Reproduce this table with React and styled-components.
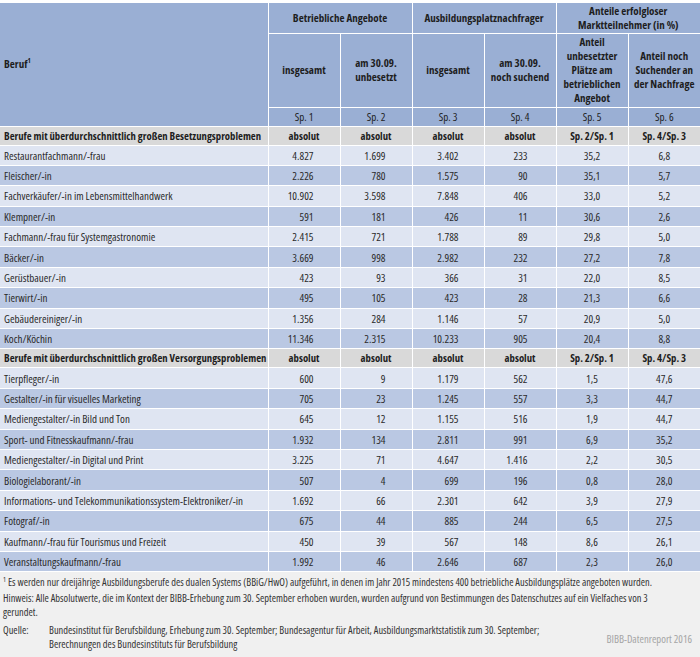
import React from 'react';
import styled, { createGlobalStyle } from 'styled-components';

const GlobalStyle = createGlobalStyle`
  body {
    margin: 0;
    background: #fff;
    font-family: "Open Sans", "Roboto", "DejaVu Sans Condensed", sans-serif;
    font-stretch: 75%;
    color: #2a2a2a;
  }
`;

const Page = styled.div`
  width: 700px;
  padding-top: 3px;
`;

const Table = styled.table`
  width: 700px;
  border-collapse: collapse;
  table-layout: fixed;
  font-size: 11px;
`;

const HeadCell = styled.th`
  background: #9aafd4;
  border: 1px solid #fff;
  border-top: 0;
  font-weight: ${props => props.$light ? 'normal' : 'bold'};
  text-align: ${props => props.$left ? 'left' : 'center'};
  padding: ${props => props.$left ? '0 4px' : '0 3px'};
  line-height: 14px;
  color: #1e1e1e;
  &:first-child { border-left: 0; }
  &:last-child { border-right: 0; }
`;

const HeadRow = styled.tr`
  height: ${props => props.$h}px;
`;

const SectionRow = styled.tr`
  height: 19px;
  background: #d9d9d9;
  font-weight: bold;
  font-size: 10.7px;
  color: #1e1e1e;
`;

const DataRow = styled.tr`
  height: 20.4px;
  background: ${props => props.$dark ? '#bac8e3' : '#dfe5f2'};
`;

const Cell = styled.td`
  border: 1px solid #fff;
  padding: 0 ${props => props.$pad || 4}px 0 4px;
  text-align: ${props => props.$align || 'left'};
  white-space: nowrap;
  &:first-child { border-left: 0; }
  &:last-child { border-right: 0; }
`;

const Sup = styled.sup`
  font-size: 7px;
  line-height: 0;
`;

const Footer = styled.div`
  background: #f0f0f0;
  padding: 3px 3px 6px;
  font-size: 10.4px;
  line-height: 14px;
  color: #333;
`;

const Note = styled.p`
  margin: 0 0 2px;
  white-space: nowrap;
`;

const Source = styled.div`
  display: flex;
  margin-top: 4px;
  position: relative;
`;

const SourceLabel = styled.span`
  flex: 0 0 46px;
`;

const Credit = styled.span`
  position: absolute;
  right: 5px;
  bottom: 5px;
  color: #a5a5a5;
  font-size: 10.7px;
`;

const groups = [
  ['Berufe mit überdurchschnittlich großen Besetzungsproblemen', [
    ['Restaurantfachmann/-frau', '4.827', '1.699', '3.402', '233', '35,2', '6,8'],
    ['Fleischer/-in', '2.226', '780', '1.575', '90', '35,1', '5,7'],
    ['Fachverkäufer/-in im Lebensmittelhandwerk', '10.902', '3.598', '7.848', '406', '33,0', '5,2'],
    ['Klempner/-in', '591', '181', '426', '11', '30,6', '2,6'],
    ['Fachmann/-frau für Systemgastronomie', '2.415', '721', '1.788', '89', '29,8', '5,0'],
    ['Bäcker/-in', '3.669', '998', '2.982', '232', '27,2', '7,8'],
    ['Gerüstbauer/-in', '423', '93', '366', '31', '22,0', '8,5'],
    ['Tierwirt/-in', '495', '105', '423', '28', '21,3', '6,6'],
    ['Gebäudereiniger/-in', '1.356', '284', '1.146', '57', '20,9', '5,0'],
    ['Koch/Köchin', '11.346', '2.315', '10.233', '905', '20,4', '8,8'],
  ]],
  ['Berufe mit überdurchschnittlich großen Versorgungsproblemen', [
    ['Tierpfleger/-in', '600', '9', '1.179', '562', '1,5', '47,6'],
    ['Gestalter/-in für visuelles Marketing', '705', '23', '1.245', '557', '3,3', '44,7'],
    ['Mediengestalter/-in Bild und Ton', '645', '12', '1.155', '516', '1,9', '44,7'],
    ['Sport- und Fitnesskaufmann/-frau', '1.932', '134', '2.811', '991', '6,9', '35,2'],
    ['Mediengestalter/-in Digital und Print', '3.225', '71', '4.647', '1.416', '2,2', '30,5'],
    ['Biologielaborant/-in', '507', '4', '699', '196', '0,8', '28,0'],
    ['Informations- und Telekommunikationssystem-Elektroniker/-in', '1.692', '66', '2.301', '642', '3,9', '27,9'],
    ['Fotograf/-in', '675', '44', '885', '244', '6,5', '27,5'],
    ['Kaufmann/-frau für Tourismus und Freizeit', '450', '39', '567', '148', '8,6', '26,1'],
    ['Veranstaltungskaufmann/-frau', '1.992', '46', '2.646', '687', '2,3', '26,0'],
  ]],
];

const pads = [26, 26, 25, 28];

const App = () => (
  <Page>
    <GlobalStyle />
    <Table>
      <colgroup>
        <col style={{ width: 268 }} />
        {[0, 1, 2, 3, 4, 5].map(i => <col key={i} style={{ width: 72 }} />)}
      </colgroup>
      <thead>
        <HeadRow $h={30}>
          <HeadCell rowSpan={3} $left>Beruf<Sup>1</Sup></HeadCell>
          <HeadCell colSpan={2}>Betriebliche Angebote</HeadCell>
          <HeadCell colSpan={2}>Ausbildungsplatznachfrager</HeadCell>
          <HeadCell colSpan={2}>Anteile erfolgloser<br />Marktteilnehmer (in %)</HeadCell>
        </HeadRow>
        <HeadRow $h={74}>
          <HeadCell>insgesamt</HeadCell>
          <HeadCell>am 30.09.<br />unbesetzt</HeadCell>
          <HeadCell>insgesamt</HeadCell>
          <HeadCell>am 30.09.<br />noch suchend</HeadCell>
          <HeadCell>Anteil<br />unbesetzter<br />Plätze am<br />betrieblichen<br />Angebot</HeadCell>
          <HeadCell>Anteil noch<br />Suchender an<br />der Nachfrage</HeadCell>
        </HeadRow>
        <HeadRow $h={19}>
          {[1, 2, 3, 4, 5, 6].map(n => <HeadCell key={n} $light>Sp. {n}</HeadCell>)}
        </HeadRow>
      </thead>
      {groups.map(([title, rows]) => (
        <tbody key={title}>
          <SectionRow>
            <Cell>{title}</Cell>
            <Cell $align="center">absolut</Cell>
            <Cell $align="center">absolut</Cell>
            <Cell $align="center">absolut</Cell>
            <Cell $align="center">absolut</Cell>
            <Cell $align="center">Sp. 2/Sp. 1</Cell>
            <Cell $align="center">Sp. 4/Sp. 3</Cell>
          </SectionRow>
          {rows.map(([name, ...vals], i) => (
            <DataRow key={name} $dark={i % 2 === 1}>
              <Cell>{name}</Cell>
              {vals.map((v, j) => j < 4
                ? <Cell key={j} $align="right" $pad={pads[j]}>{v}</Cell>
                : <Cell key={j} $align="center">{v}</Cell>)}
            </DataRow>
          ))}
        </tbody>
      ))}
    </Table>
    <Footer>
      <Note><Sup>1</Sup> Es werden nur dreijährige Ausbildungsberufe des dualen Systems (BBiG/HwO) aufgeführt, in denen im Jahr 2015 mindestens 400 betriebliche Ausbildungsplätze angeboten wurden.</Note>
      <Note>Hinweis: Alle Absolutwerte, die im Kontext der BIBB-Erhebung zum 30. September erhoben wurden, wurden aufgrund von Bestimmungen des Datenschutzes auf ein Vielfaches von 3<br />gerundet.</Note>
      <Source>
        <SourceLabel>Quelle:</SourceLabel>
        <span>Bundesinstitut für Berufsbildung, Erhebung zum 30. September; Bundesagentur für Arbeit, Ausbildungsmarktstatistik zum 30. September;<br />Berechnungen des Bundesinstituts für Berufsbildung</span>
        <Credit>BIBB-Datenreport 2016</Credit>
      </Source>
    </Footer>
  </Page>
);

export default App;
